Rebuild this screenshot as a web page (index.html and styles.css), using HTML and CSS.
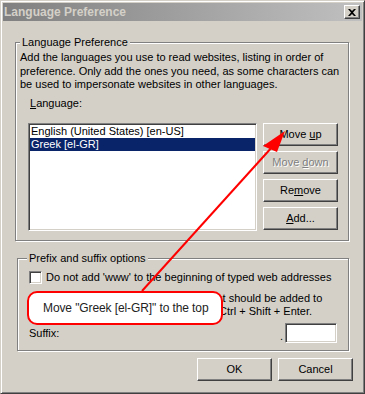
FILE: index.html
```html
<!DOCTYPE html>
<html lang="en">
<head>
  <meta charset="UTF-8">
  <title>Language Preference</title>
  <link rel="stylesheet" href="styles.css">
</head>
<body>

  <div class="window">
    <div class="titlebar">
      <span class="title">Language Preference</span>
      <span class="close-btn">
        <svg width="8" height="7" viewBox="0 0 8 7"><path d="M0 0h2l2 2 2-2h2L5 3.5 8 7H6L4 5 2 7H0l3-3.5z" fill="#000"/></svg>
      </span>
    </div>

    <div class="content">
      <fieldset class="group group-lang">
        <legend>Language Preference</legend>
        <p class="desc">Add the languages you use to read websites, listing in order of<br>preference. Only add the ones you need, as some characters can<br>be used to impersonate websites in other languages.</p>
        <div class="field-label"><u>L</u>anguage:</div>
        <div class="lang-row">
          <div class="listbox">
            <div class="list-item">English (United States) [en-US]</div>
            <div class="list-item selected">Greek [el-GR]</div>
          </div>
          <div class="side-buttons">
            <div class="btn"><span>Move <u>u</u>p</span></div>
            <div class="btn disabled"><span>Move <u>d</u>own</span></div>
            <div class="btn"><span>Re<u>m</u>ove</span></div>
            <div class="btn"><span><u>A</u>dd...</span></div>
          </div>
        </div>
      </fieldset>

      <fieldset class="group group-prefix">
        <legend>Prefix and suffix options</legend>
        <div class="check-row">
          <span class="checkbox"></span>
          <span>Do not add 'www' to the beginning of typed web addresses</span>
        </div>
        <p class="suffix-desc">Specify the suffix (for example .net) that should be added to<br>typed web addresses when you press Ctrl + Shift + Enter.</p>
        <div class="suffix-row">
          <span>Suffix:</span>
          <span class="suffix-input-wrap">.<span class="textbox"></span></span>
        </div>
      </fieldset>

      <div class="dialog-buttons">
        <div class="btn"><span>OK</span></div>
        <div class="btn"><span>Cancel</span></div>
      </div>
    </div>

    <div class="callout">Move "Greek [el-GR]" to the top</div>
    <svg class="annotation" width="365" height="394" viewBox="0 0 365 394">
      <line x1="141" y1="290" x2="272" y2="145" stroke="#ff0000" stroke-width="2"/>
      <polygon points="284,130 262,145 276,151" fill="#ff0000"/>
    </svg>
  </div>

</body>
</html>
```

FILE: styles.css
```css
* {
  margin: 0;
  padding: 0;
  box-sizing: border-box;
}
body {
  font-family: 'Liberation Sans', Arial, sans-serif;
  font-size: 11px;
  color: #000;
  background: #d4d0c8;
}
.window {
  position: relative;
  width: 365px;
  height: 394px;
  background: #d4d0c8;
  border: 1px solid;
  border-color: #d4d0c8 #404040 #404040 #d4d0c8;
  box-shadow: inset 1px 1px 0 #fff, inset -1px -1px 0 #808080;
  padding: 2px;
}
.titlebar {
  height: 18px;
  display: flex;
  align-items: center;
  justify-content: space-between;
  padding: 0 2px 0 1px;
  background: linear-gradient(to right, #808080, #c0c0c0);
}
.title {
  font-weight: bold;
  font-size: 12px;
  color: #d4d0c8;
}
.close-btn {
  width: 16px;
  height: 14px;
  display: flex;
  align-items: center;
  justify-content: center;
  background: #d4d0c8;
  border: 1px solid;
  border-color: #fff #404040 #404040 #fff;
  box-shadow: inset -1px -1px 0 #808080;
}
.content {
  padding: 15px 0 0 12px;
}
.group {
  border: 1px solid #808080;
  box-shadow: 1px 1px 0 #fff, inset 1px 1px 0 #fff;
}
.group legend {
  padding: 0 2px;
  line-height: 13px;
  background: #d4d0c8;
}
.group-lang {
  width: 334px;
  padding: 2px 4px 9px 4px;
}
.desc {
  line-height: 13.5px;
}
.field-label {
  line-height: 13px;
  margin: 5px 0 13px 10px;
}
.lang-row {
  display: flex;
  gap: 6px;
  margin-left: 8px;
}
.listbox {
  width: 229px;
  height: 108px;
  background: #fff;
  border: 1px solid;
  border-color: #808080 #fff #fff #808080;
  box-shadow: inset 1px 1px 0 #404040, inset -1px -1px 0 #d4d0c8;
  padding: 1px;
}
.list-item {
  height: 13px;
  line-height: 13px;
  padding-left: 1px;
  white-space: nowrap;
}
.list-item.selected {
  background: #0a246a;
  color: #fff;
}
.side-buttons {
  display: flex;
  flex-direction: column;
  gap: 5px;
}
.btn {
  width: 75px;
  height: 23px;
  display: flex;
  align-items: center;
  justify-content: center;
  white-space: pre;
  background: #d4d0c8;
  border: 1px solid;
  border-color: #fff #404040 #404040 #fff;
  box-shadow: inset -1px -1px 0 #808080;
}
.btn.disabled {
  color: #808080;
  text-shadow: 1px 1px 0 #fff;
}
.group-prefix {
  width: 332px;
  margin: 11px 0 0 2px;
  padding: 6px 11px 7px 11px;
}
.group-prefix legend {
  margin-left: -2px;
}
.check-row {
  display: flex;
  align-items: center;
  gap: 4px;
  height: 13px;
  white-space: nowrap;
}
.checkbox {
  width: 13px;
  height: 13px;
  background: #fff;
  border: 1px solid;
  border-color: #808080 #fff #fff #808080;
  box-shadow: inset 1px 1px 0 #404040, inset -1px -1px 0 #d4d0c8;
}
.suffix-desc {
  line-height: 13px;
  margin: 8px 0 0 3px;
  white-space: nowrap;
}
.suffix-row {
  display: flex;
  justify-content: space-between;
  align-items: center;
  margin-top: 5px;
}
.suffix-input-wrap {
  display: flex;
  align-items: flex-end;
  gap: 2px;
  line-height: 13px;
}
.textbox {
  width: 52px;
  height: 20px;
  background: #fff;
  border: 1px solid;
  border-color: #808080 #fff #fff #808080;
  box-shadow: inset 1px 1px 0 #404040, inset -1px -1px 0 #d4d0c8;
}
.dialog-buttons {
  display: flex;
  justify-content: flex-end;
  gap: 6px;
  margin-top: 7px;
  padding-right: 9px;
}
.callout {
  position: absolute;
  left: 26px;
  top: 290px;
  width: 196px;
  height: 34px;
  background: #fff;
  border: 2px solid #ff0000;
  border-radius: 10px;
  font-family: Arial, 'Liberation Sans', sans-serif;
  font-size: 12px;
  letter-spacing: -0.1px;
  color: #222;
  display: flex;
  align-items: center;
  padding-left: 14px;
}
.annotation {
  position: absolute;
  left: 0;
  top: 0;
  pointer-events: none;
}
```
